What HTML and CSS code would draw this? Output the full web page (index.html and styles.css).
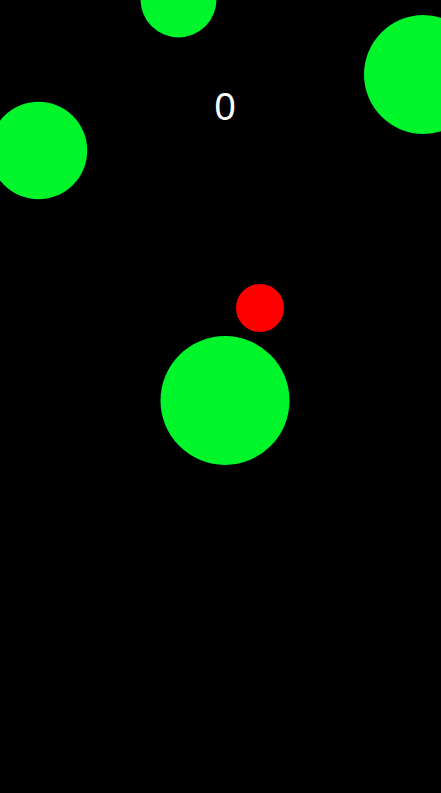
FILE: index.html
```html
<!DOCTYPE html>
<html>
<head>
<meta charset="utf-8">
<link rel="stylesheet" href="styles.css">
</head>
<body>
<div class="game">
  <svg class="field" width="441" height="793" viewBox="0 0 441 793">
    <circle class="orb" cx="178.5" cy="-0.5" r="38"/>
    <circle class="orb" cx="423.5" cy="74.5" r="59.5"/>
    <circle class="orb" cx="38.5" cy="150.5" r="48.7"/>
    <circle class="orb" cx="225" cy="400.5" r="64.5"/>
    <circle class="player" cx="260" cy="308" r="24"/>
  </svg>
  <div class="score">0</div>
</div>
</body>
</html>
```
FILE: styles.css
```css
html, body {
  margin: 0;
  padding: 0;
  background: #000;
  overflow: hidden;
}
.game {
  position: relative;
  width: 441px;
  height: 793px;
  background: #000;
}
.field {
  display: block;
}
.orb {
  fill: #00f52a;
}
.player {
  fill: #ff0000;
}
.score {
  position: absolute;
  top: 87px;
  left: 0;
  width: 450px;
  text-align: center;
  color: #fff;
  font-family: "Liberation Sans", Arial, sans-serif;
  font-size: 38px;
  line-height: 40px;
}
```
